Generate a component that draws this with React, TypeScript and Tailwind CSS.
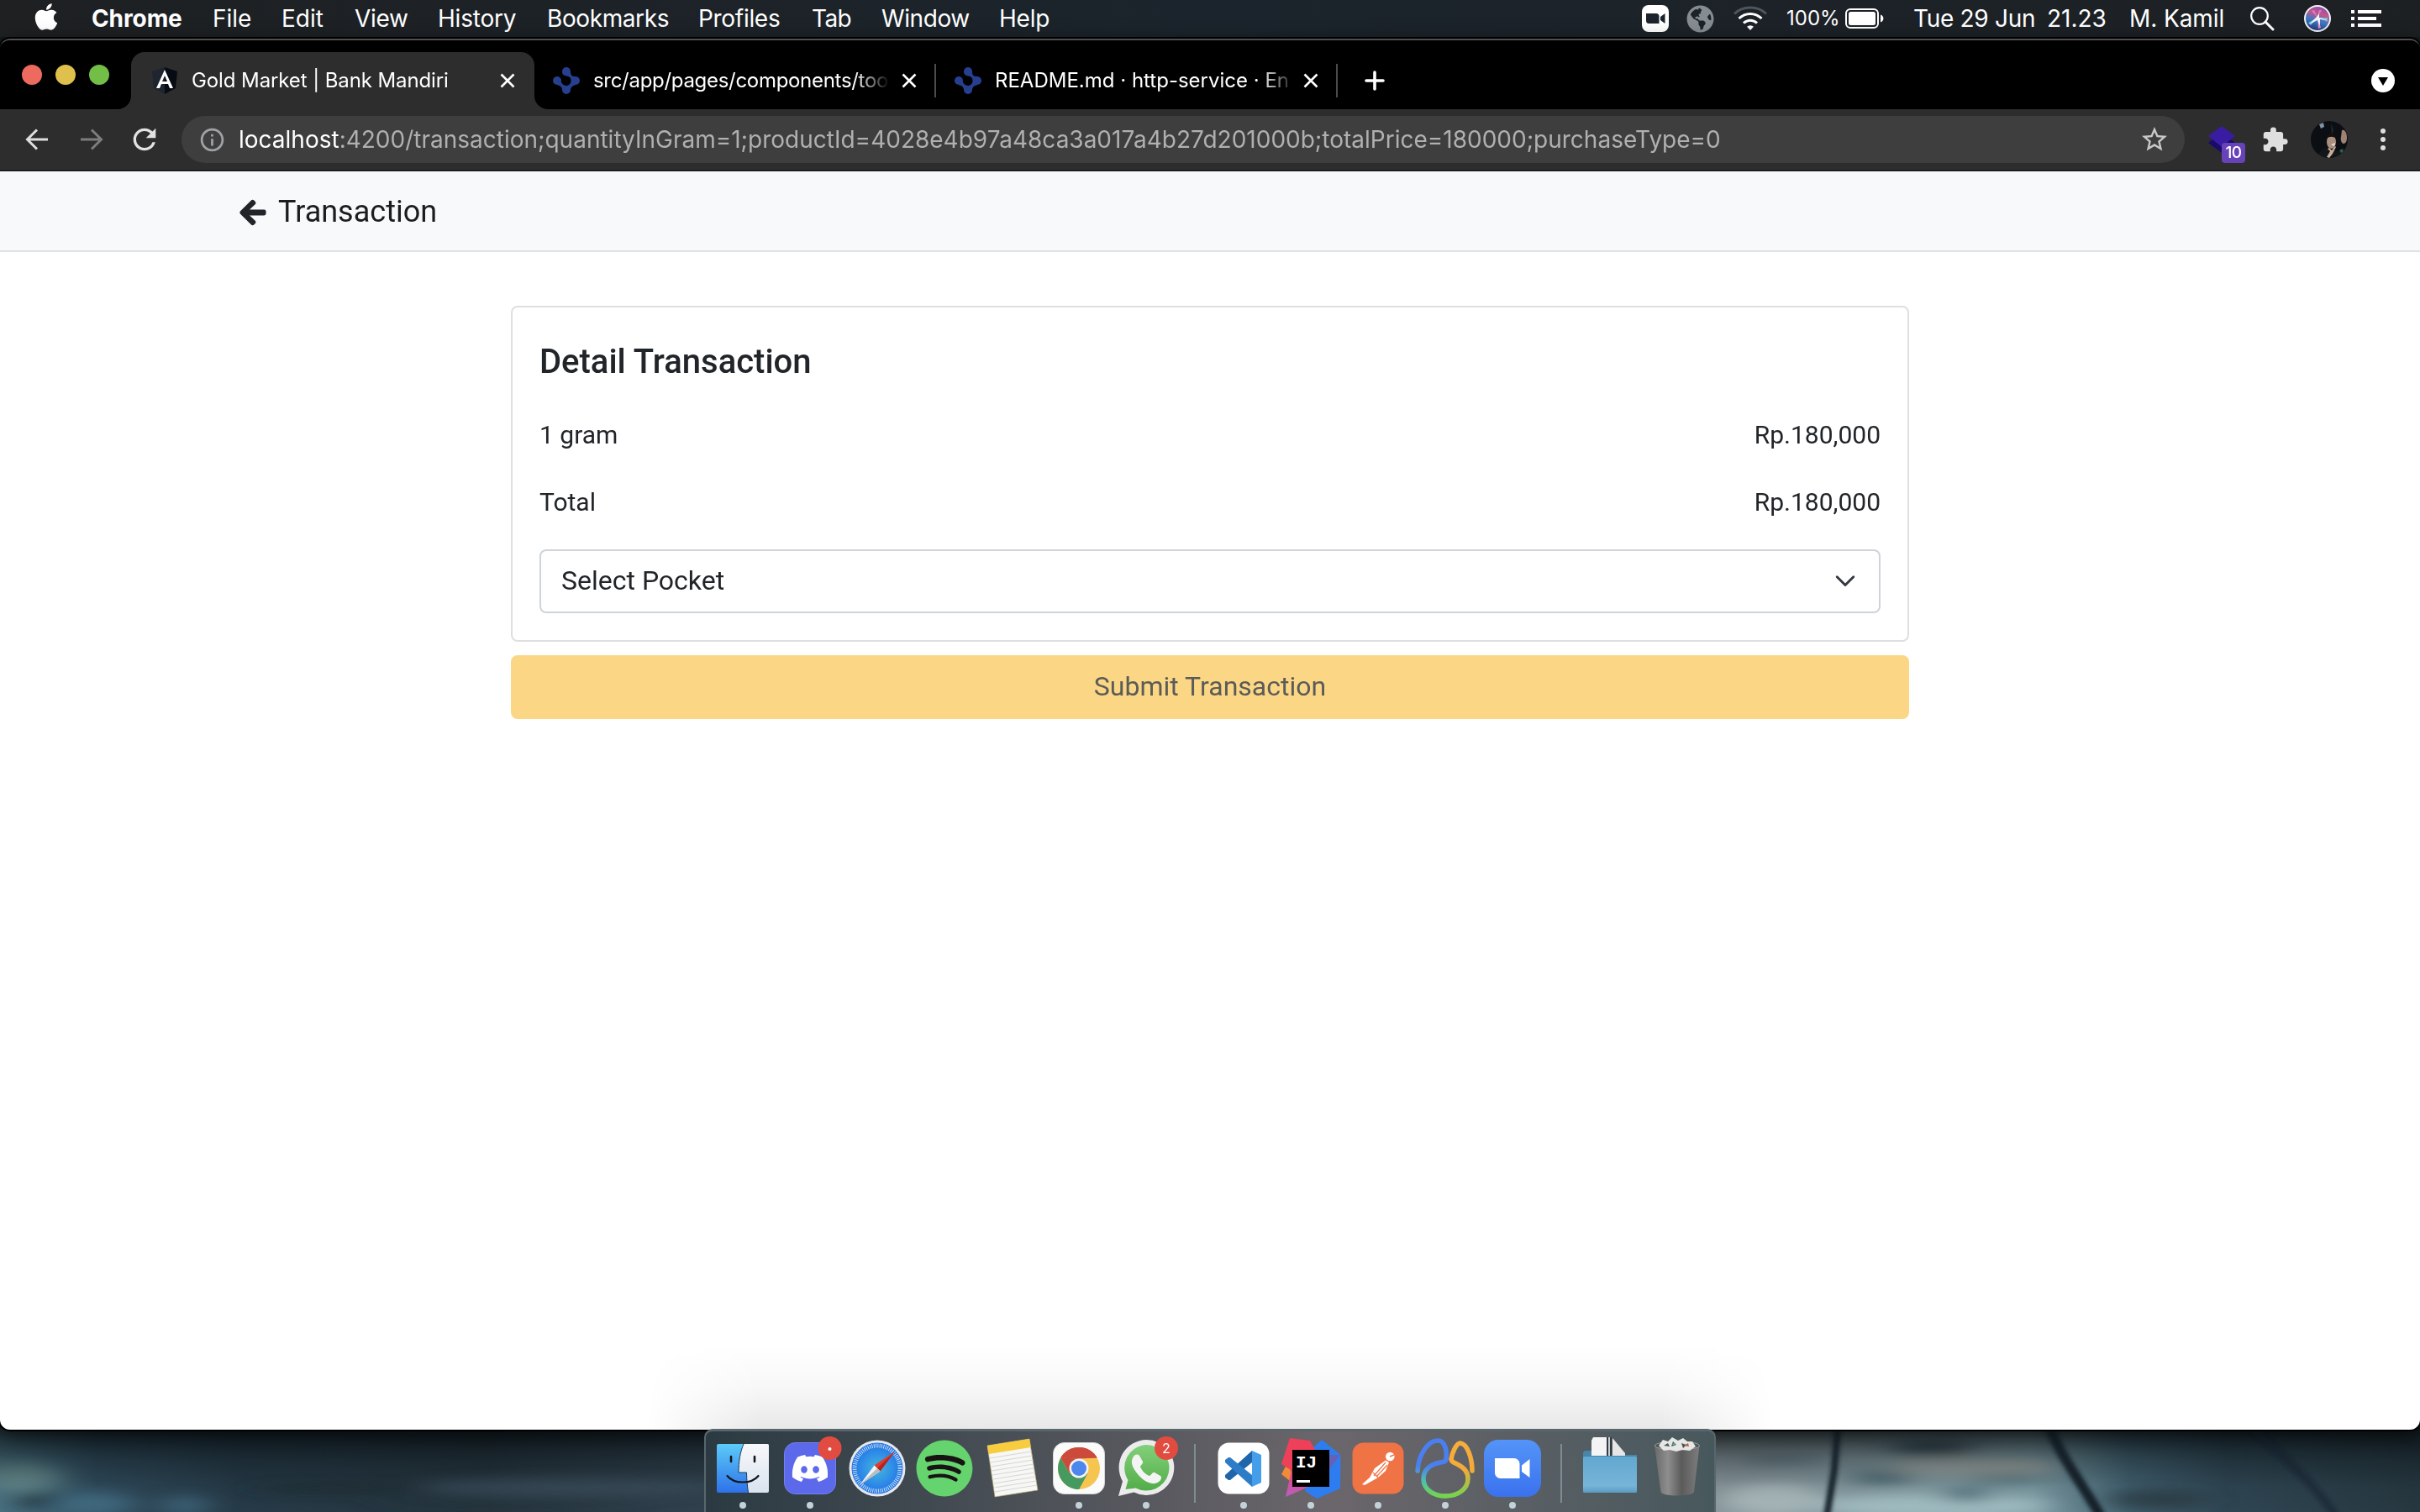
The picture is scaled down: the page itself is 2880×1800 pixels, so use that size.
import type { ReactNode } from "react";
import { FaApple, FaArrowLeft, FaDiscord, FaGlobeAmericas, FaPhoneAlt, FaSpotify } from "react-icons/fa";
import { MdExtension, MdInfoOutline, MdRefresh, MdStarBorder } from "react-icons/md";

const menus = [
  { label: "Chrome", cls: "w-[145px] pl-px font-bold tracking-[-0.1px]" },
  { label: "File", cls: "w-[82px]" },
  { label: "Edit", cls: "w-[87px]" },
  { label: "View", cls: "w-[99px] tracking-[-0.3px]" },
  { label: "History", cls: "w-[130px] tracking-[-0.2px]" },
  { label: "Bookmarks", cls: "w-[180px] tracking-[-0.4px]" },
  { label: "Profiles", cls: "w-[135px] tracking-[-0.3px]" },
  { label: "Tab", cls: "w-[83px] tracking-[-0.6px]" },
  { label: "Window", cls: "w-[140px] tracking-[-0.4px]" },
  { label: "Help", cls: "w-[80px] tracking-[-0.2px]" },
];

function MenuBar() {
  return (
    <div className="flex h-[44px] shrink-0 items-center whitespace-pre bg-linear-to-r from-[#1e2022] via-[#1b242c] to-[#1d2023] text-[28px] leading-[44px] text-white">
      <FaApple size={36} className="mr-[35px] ml-[37px] -mt-[5px]" />
      {menus.map((m) => (
        <div key={m.label} className={m.cls}>{m.label}</div>
      ))}
      <div className="ml-auto flex items-center pr-[46px]">
        <svg width="32" height="32" viewBox="0 0 32 32">
          <rect width="32" height="32" rx="8" fill="#fff" />
          <path d="M5 10h12a3.500 3.500 0 0 1 3.500 3.500V22H8.500A3.500 3.500 0 0 1 5 18.500zM22 14l5.500-4v12L22 18z" fill="#1b242c" />
        </svg>
        <FaGlobeAmericas size={33} className="ml-[21px] text-[#868d92]" />
        <svg width="40" height="32" viewBox="0 0 40 32" className="ml-[23px]" fill="none" strokeWidth="3">
          <path d="M1 10.500C11 .5 29 .5 39 10.500" stroke="#4d555b" />
          <path d="M6.500 16C14 8.500 26 8.500 33.500 16" stroke="#fff" />
          <path d="M12 21.500c4.800-4.500 11.200-4.500 16 0" stroke="#fff" />
          <path d="M20 30l-4-4.200c2.500-2 5.500-2 8 0z" fill="#fff" />
        </svg>
        <div className="ml-[23px] w-[61px] text-[24px]">100%</div>
        <svg width="46" height="24" viewBox="0 0 46 24" className="ml-[9px]">
          <rect x="1" y="1" width="38" height="22" rx="5" fill="none" stroke="#fff" strokeWidth="2" />
          <rect x="4" y="4" width="32" height="16" rx="2.500" fill="#fff" />
          <path d="M42 7.500c4.500 1 4.500 8 0 9z" fill="#fff" />
        </svg>
        <div className="ml-[35px] w-[148px] tracking-[-0.3px]">Tue 29 Jun</div>
        <div className="ml-[11px] w-[71px]">21.23</div>
        <div className="ml-[27px] w-[113px] tracking-[-0.1px]">M. Kamil</div>
        <svg width="29" height="29" viewBox="0 0 29 29" className="ml-[31px]" fill="none" stroke="#fff">
          <circle cx="11" cy="11" r="9.800" strokeWidth="2.200" />
          <path d="M18 18l9 9" strokeWidth="3" strokeLinecap="round" />
        </svg>
        <svg width="32" height="32" viewBox="0 0 32 32" className="ml-[35px]">
          <defs>
            <linearGradient id="siri" x1="0.6" y1="0" x2="0.3" y2="1">
              <stop offset="0" stopColor="#8a4fa8" />
              <stop offset="0.3" stopColor="#c2568f" />
              <stop offset="0.6" stopColor="#3a78c4" />
              <stop offset="1" stopColor="#22306e" />
            </linearGradient>
          </defs>
          <circle cx="16" cy="16" r="15" fill="url(#siri)" stroke="#f1f1f4" strokeWidth="2" />
          <path d="M16 15L5 21l3 3zM16 15l12 5 0-5z" fill="#6fd6dc" opacity="0.8" />
          <path d="M16 15l1 13 3-1z" fill="#e58fd0" />
          <path d="M16 15L9 7l3-1zM16 15l5-9-3 0z" fill="#e58bbd" opacity="0.8" />
          <path d="M6 23l9-9 3-4 0 5 10 3-9-1 0 8-3-7z" fill="#fff" opacity="0.9" />
        </svg>
        <svg width="36" height="20" viewBox="0 0 36 20" className="ml-[24px]" fill="#fff">
          <path d="M0 0h4v4H0zM8 0h28v4H8zM0 8h4v4H0zM8 8h22v4H8zM0 16h4v4H0zM8 16h28v4H8z" />
        </svg>
      </div>
    </div>
  );
}

function CloseIcon() {
  return (
    <svg width="18" height="18" viewBox="0 0 18 18" className="shrink-0" stroke="#fff" strokeWidth="2.600">
      <path d="M1.500 1.500l15 15M16.500 1.500l-15 15" />
    </svg>
  );
}

function RepoIcon() {
  return (
    <svg width="32" height="32" viewBox="0 0 32 32" className="shrink-0" fill="#263f8f">
      <circle cx="16" cy="5" r="5" />
      <circle cx="5" cy="16" r="5" />
      <circle cx="27" cy="16" r="5" />
      <circle cx="16" cy="27" r="5" />
      <path d="M11 5h10c0 5 2 6 6 6v10c-4 1-6 3-6 6H11c0-3-2-5-6-6l3-9c1 6 4 10 8 10 3 0 5.500-2.500 5.500-6s-2-5-5.500-5.500S11 8 11 5z" />
    </svg>
  );
}

function TabStrip() {
  return (
    <div className="flex h-[82px] items-end bg-black text-[24px] text-white">
      <div className="mb-[29px] ml-[26px] flex gap-4">
        <div className="size-6 rounded-full bg-[#ed6a5f]" />
        <div className="size-6 rounded-full bg-[#e0c04c]" />
        <div className="size-6 rounded-full bg-[#72be47]" />
      </div>
      <div className="relative ml-[26px] flex h-[68px] w-[480px] items-center rounded-t-[16px] bg-[#2d2d2d] pl-[24px]">
        <svg width="16" height="16" viewBox="0 0 16 16" className="absolute bottom-0 -left-[16px]" fill="#2d2d2d">
          <path d="M16 0v16H0A16 16 0 0 0 16 0z" />
        </svg>
        <svg width="16" height="16" viewBox="0 0 16 16" className="absolute -right-[16px] bottom-0" fill="#2d2d2d">
          <path d="M0 0v16h16A16 16 0 0 1 0 0z" />
        </svg>
        <svg width="32" height="32" viewBox="0 0 32 32" className="shrink-0">
          <path d="M16 0L1 5l2 20 13 7z" fill="#1e2430" />
          <path d="M16 0l15 5-2 20-13 7z" fill="#070b14" />
          <path d="M16 3L6 25h4l2-5h8l2 5h4zm0 7l3 7h-6z" fill="#fff" fillRule="evenodd" />
        </svg>
        <div className="ml-[16px] w-[367px] whitespace-pre tracking-[-0.1px]">Gold Market | Bank Mandiri</div>
        <CloseIcon />
      </div>
      <div className="flex h-[68px] w-[478px] items-center pl-[22px]">
        <RepoIcon />
        <div className="ml-[16px] w-[353px] overflow-hidden whitespace-pre tracking-[-0.3px] mask-r-from-88% mask-r-to-100%">src/app/pages/components/too</div>
        <div className="ml-[14px] flex"><CloseIcon /></div>
        <div className="ml-auto h-[40px] w-[2px] bg-[#4c4c4c]" />
      </div>
      <div className="flex h-[68px] w-[478px] items-center pl-[22px]">
        <RepoIcon />
        <div className="ml-[16px] w-[351px] overflow-hidden whitespace-pre mask-r-from-90% mask-r-to-102%">README.md · http-service · En</div>
        <div className="ml-[16px] flex"><CloseIcon /></div>
        <div className="ml-auto h-[40px] w-[2px] bg-[#4c4c4c]" />
      </div>
      <svg width="24" height="24" viewBox="0 0 24 24" className="mb-[22px] ml-[32px]" stroke="#fff" strokeWidth="3.600" strokeLinecap="round">
        <path d="M12 2v20M2 12h20" />
      </svg>
      <svg width="28" height="28" viewBox="0 0 28 28" className="mr-[30px] mb-[20px] ml-auto">
        <circle cx="14" cy="14" r="14" fill="#fff" />
        <path d="M8 10h12l-6 10z" fill="#000" />
      </svg>
    </div>
  );
}

function Toolbar() {
  return (
    <div className="flex h-[74px] items-center border-b-2 border-[#1e1e1f] bg-[#2d2d2d] text-[28px]">
      <svg width="28" height="26" viewBox="0 0 28 26" className="ml-[30px]" fill="none" stroke="#dedede" strokeWidth="3">
        <path d="M27 13H3M14 1.500L2.500 13 14 24.500" />
      </svg>
      <svg width="28" height="26" viewBox="0 0 28 26" className="ml-[37px]" fill="none" stroke="#7d7d7d" strokeWidth="3">
        <path d="M1 13h24M14 1.500L25.500 13 14 24.500" />
      </svg>
      <MdRefresh size={40} className="ml-[29px] text-[#e2e2e2]" />
      <div className="ml-[24px] flex h-[56px] w-[2384px] items-center rounded-full bg-[#3e3e3e] pr-[18px] pl-[20px]">
        <MdInfoOutline size={33} className="text-[#9fa3a8]" />
        <div className="ml-[15px] whitespace-pre text-[#b0b0b0]">
          <span className="text-white">localhost</span>:4200/transaction;quantityInGram=1;productId=4028e4b97a48ca3a017a4b27d201000b;totalPrice=180000;purchaseType=0
        </div>
        <MdStarBorder size={36} className="ml-auto text-[#c8c8c8]" />
      </div>
      <div className="relative ml-[28px] h-[44px] w-[44px]">
        <svg width="32" height="32" viewBox="0 0 32 32" className="mt-[6px]">
          <path d="M0 20L16 8l16 12-16 12z" fill="#1a0a6b" />
          <path d="M0 12L16 0l16 12-16 13z" fill="#3a1ca3" />
        </svg>
        <div className="absolute top-[26px] left-[16px] flex h-[24px] w-[28px] items-center justify-center rounded-[4px] bg-[#6842b8] text-[19px] font-medium tracking-[-0.5px] text-white">10</div>
      </div>
      <MdExtension size={33} className="ml-[19px] text-[#dfdfdf]" />
      <svg width="44" height="44" viewBox="0 0 44 44" className="ml-[26px] rounded-full">
        <rect width="44" height="44" fill="#0b0f13" />
        <path d="M10 4l5-2 1 5-4 2z" fill="#7e93a3" />
        <path d="M24 3l3 8-2 6z" fill="#1f2a33" />
        <ellipse cx="24.500" cy="25" rx="5.500" ry="8" fill="#a98f7f" />
        <path d="M18.500 21c0-7 11-8 12 0-4-3-8-3-12 0z" fill="#15110f" />
        <path d="M24 28l5-2-1 4z" fill="#e8ddd5" />
        <path d="M37 11c4-1 6 4 6 9s-2 7-4 7-4-4-3-8z" fill="#a08272" />
        <path d="M8 44c2-12 10-12 16-10s14 0 16 10z" fill="#12171b" />
        <path d="M19 43l4-7-3-3 2-1 3 3 4-5 1 1-4 8-4 5z" fill="#c9ad98" />
        <path d="M34 35l4-2 1 4-3 1z" fill="#2b5e57" />
      </svg>
      <svg width="6" height="26" viewBox="0 0 6 26" className="ml-[39px]" fill="#dfdfdf">
        <circle cx="3" cy="3" r="3" />
        <circle cx="3" cy="13" r="3" />
        <circle cx="3" cy="23" r="3" />
      </svg>
    </div>
  );
}

function Row({ label, value }: { label: string; value: string }) {
  return (
    <div className="flex h-[48px] justify-between text-[30px] leading-[48px]">
      <span>{label}</span>
      <span>{value}</span>
    </div>
  );
}

function Page() {
  return (
    <div className="grow bg-white font-[Roboto,sans-serif] text-[#212529]">
      <header className="flex h-[96px] items-center border-b-2 border-[#dee2e6] bg-[#f8f9fb] pl-[284px]">
        <FaArrowLeft size={34} className="mt-[3px]" stroke="#212529" strokeWidth={22} strokeLinejoin="round" />
        <span className="mt-px ml-[13px] text-[36px] text-[#1b1d1f]">Transaction</span>
      </header>
      <main className="mx-auto w-[1664px] pt-[64px]">
        <section className="rounded-lg border-2 border-[#dfdfdf] px-8 pt-[41px] pb-8">
          <h1 className="text-[40px] leading-[48px] font-medium">Detail Transaction</h1>
          <div className="mt-[39px] flex flex-col gap-8">
            <Row label="1 gram" value="Rp.180,000" />
            <Row label="Total" value="Rp.180,000" />
            <div className="flex h-[76px] items-center justify-between rounded-lg border-2 border-[#ced4da] pr-[28px] pl-[24px] text-[32px]">
              <span className="-mt-[2px]">Select Pocket</span>
              <svg width="24" height="24" viewBox="0 0 16 16" fill="none" stroke="#343a40" strokeWidth="2" strokeLinecap="round" strokeLinejoin="round">
                <path d="M1.500 4.500l6.500 6.500 6.500-6.500" />
              </svg>
            </div>
          </div>
        </section>
        <button className="mt-4 block h-[76px] w-full rounded-lg bg-[#fbd785] pb-[2px] text-[32px] text-[#5b5b58]">Submit Transaction</button>
      </main>
    </div>
  );
}

function Wallpaper() {
  return (
    <svg width="2880" height="100" viewBox="0 0 2880 100" preserveAspectRatio="none" className="absolute bottom-0 left-0">
      <defs>
        <linearGradient id="wall" x1="0" x2="1" y1="0" y2="0">
          <stop offset="0" stopColor="#4a7180" />
          <stop offset="0.04" stopColor="#2f4a5a" />
          <stop offset="0.1" stopColor="#263a47" />
          <stop offset="0.2" stopColor="#25343d" />
          <stop offset="0.29" stopColor="#30414d" />
          <stop offset="0.6" stopColor="#5a6668" />
          <stop offset="0.71" stopColor="#87959a" />
          <stop offset="0.84" stopColor="#7c9aa2" />
          <stop offset="0.88" stopColor="#41606f" />
          <stop offset="0.92" stopColor="#2f4653" />
          <stop offset="1" stopColor="#26373f" />
        </linearGradient>
        <linearGradient id="wallShade" x1="0" x2="0" y1="0" y2="1">
          <stop offset="0" stopColor="#050a0d" stopOpacity="0.72" />
          <stop offset="0.35" stopColor="#050a0d" stopOpacity="0.35" />
          <stop offset="0.7" stopColor="#050a0d" stopOpacity="0.06" />
          <stop offset="1" stopColor="#050a0d" stopOpacity="0" />
        </linearGradient>
        <filter id="soft" x="-50%" y="-50%" width="200%" height="200%"><feGaussianBlur stdDeviation="18 7" /></filter>
        <filter id="edge" x="-100%" y="-20%" width="300%" height="140%"><feGaussianBlur stdDeviation="2.500" /></filter>
      </defs>
      <rect width="2880" height="100" fill="url(#wall)" />
      <g filter="url(#soft)" opacity="0.8">
        <ellipse cx="25" cy="58" rx="45" ry="18" fill="#6b8f90" />
        <ellipse cx="110" cy="90" rx="50" ry="14" fill="#457188" />
        <ellipse cx="220" cy="92" rx="30" ry="12" fill="#40677f" />
        <ellipse cx="45" cy="86" rx="22" ry="10" fill="#1d2e38" />
        <ellipse cx="680" cy="70" rx="180" ry="12" fill="#3a4e5b" />
        <ellipse cx="400" cy="72" rx="110" ry="5" fill="#1b292f" />
        <ellipse cx="600" cy="88" rx="160" ry="4" fill="#22323a" />
        <ellipse cx="2110" cy="85" rx="60" ry="18" fill="#b0bfc0" />
        <ellipse cx="2300" cy="92" rx="140" ry="14" fill="#a9c6ca" />
        <ellipse cx="2350" cy="45" rx="100" ry="10" fill="#a8aba6" />
        <ellipse cx="2300" cy="24" rx="50" ry="8" fill="#1e3944" />
        <ellipse cx="2240" cy="60" rx="35" ry="8" fill="#3f606a" />
        <ellipse cx="2390" cy="60" rx="50" ry="6" fill="#4d6e77" />
        <ellipse cx="2340" cy="80" rx="30" ry="7" fill="#355a68" />
        <ellipse cx="2120" cy="38" rx="50" ry="4" fill="#4d6770" />
        <ellipse cx="2570" cy="85" rx="60" ry="12" fill="#2a3a43" />
      </g>
      <rect width="2880" height="100" fill="url(#wallShade)" />
      <g filter="url(#edge)" fill="none" stroke="#15222b">
        <path d="M2187 0l-4 50-9 55" strokeWidth="8" />
        <path d="M2440 0c10 30 40 70 60 105" strokeWidth="12" />
        <path d="M2680 0c30 30 70 60 100 105" strokeWidth="8" opacity="0.6" />
      </g>
    </svg>
  );
}

function Slot({ running, children }: { running?: boolean; children: ReactNode }) {
  return (
    <svg width="80" height="100" viewBox="0 0 80 100" className="shrink-0">
      {children}
      {running && <circle cx="40" cy="92" r="4" fill="#c3d2da" />}
    </svg>
  );
}

function DockDivider() {
  return <div className="mx-[17px] mt-[15px] h-[70px] w-[2px] shrink-0 bg-[#7d8d94]" />;
}

function Dock() {
  return (
    <div className="absolute bottom-0 left-[838px] flex h-[99px] w-[1204px] items-start overflow-hidden rounded-t-[10px] border-x-2 border-t-3 border-[#59666d] bg-linear-to-r from-[#2b3a42] from-0% via-[#6b666b] via-62% to-[#47585d] pl-[4px]">
      <div className="-mt-[4px] flex">
        <Slot running>
          <defs>
            <linearGradient id="fL" x1="0" x2="0" y1="0" y2="1"><stop stopColor="#5ccbf8" /><stop offset="1" stopColor="#2e72ea" /></linearGradient>
            <linearGradient id="fR" x1="0" x2="0" y1="0" y2="1"><stop stopColor="#f8f8fa" /><stop offset="1" stopColor="#d9e4f0" /></linearGradient>
          </defs>
          <rect x="9" y="19" width="62" height="58" rx="2" fill="url(#fL)" />
          <path d="M41 19h28a2 2 0 0 1 2 2v54a2 2 0 0 1-2 2H46.500c-1-7-2-16-2-24H35C35 40 37 28 41 19z" fill="url(#fR)" />
          <path d="M41 19C37 28 35 40 35 53h9.500c0 8 1 17 2 24" fill="none" stroke="#1c3a56" strokeWidth="1" />
          <path d="M26 34v6M54 34v6" stroke="#14171c" strokeWidth="2.600" strokeLinecap="round" />
          <path d="M21.500 57c8 10 29 10 37 0" fill="none" stroke="#14171c" strokeWidth="2.200" strokeLinecap="round" />
        </Slot>
        <Slot running>
          <rect x="9.500" y="17.500" width="61" height="61" rx="13" fill="#5b69ea" stroke="#7482f4" />
          <FaDiscord x="17" y="25" size={46} color="#fff" />
          <circle cx="63.500" cy="24" r="14" fill="#e24c40" />
          <circle cx="63.500" cy="25" r="2" fill="#fff" />
        </Slot>
        <Slot>
          <defs>
            <radialGradient id="saf"><stop stopColor="#45b6d8" /><stop offset="0.6" stopColor="#2f8ee8" /><stop offset="1" stopColor="#2270e0" /></radialGradient>
          </defs>
          <circle cx="40" cy="48" r="33.500" fill="#e6e9ee" />
          <circle cx="40" cy="48" r="30.500" fill="url(#saf)" />
          <circle cx="40" cy="48" r="27" fill="none" stroke="#d5ebfb" strokeWidth="5" strokeDasharray="0.9 1.456" />
          <path d="M61 28L36.500 44.500l7 7z" fill="#e03b2f" />
          <path d="M61 28L40 48l3.500 3.500z" fill="#b3251f" />
          <path d="M19 68l17.500-23.500 7 7z" fill="#f4f4f4" />
          <path d="M19 68l21-20 3.500 3.500z" fill="#b9bdc0" />
        </Slot>
        <Slot>
          <circle cx="40" cy="48" r="32" fill="#191414" />
          <FaSpotify x="5.500" y="13.500" size={69} color="#65d36e" />
        </Slot>
        <Slot>
          <path d="M11 21L61 13l10 61-51 8z" fill="#f7f7f5" stroke="#b7a968" strokeWidth="0.700" />
          <path d="M11 21L61 13l1.700 10L12.700 31z" fill="#f7cd3f" />
          <g stroke="#d6d6d6" strokeWidth="1">
            <path d="M13.500 36l50-8M14.400 41l50-8M15.200 46l50-8M16 51l50-8M16.800 56l50-8M17.600 61l50-8M18.400 66l50-8M19.200 71l50-8M20 76l50-8" />
          </g>
        </Slot>
        <Slot running>
          <rect x="9.500" y="17.500" width="61" height="61" rx="13" fill="#fbfbfb" stroke="#d5d8da" />
          <circle cx="40" cy="48" r="25" fill="#f6c550" />
          <path d="M18.350 35.500A25 25 0 0 1 61.650 35.500L40 36.500z" fill="#cc4a3c" />
          <path d="M18.350 35.500A25 25 0 0 1 61.650 35.500z" fill="#cc4a3c" />
          <path d="M18.350 35.500A25 25 0 0 0 40 73L50 54 29 54z" fill="#479a5f" />
          <path d="M18.350 35.500L29 54l11-6V36.500z" fill="#cc4a3c" />
          <path d="M40 73l10.400-19L40 48l-7 9z" fill="#479a5f" />
          <circle cx="40" cy="48" r="11.500" fill="#f4f4f4" />
          <circle cx="40" cy="48" r="9" fill="#4d87ee" />
        </Slot>
        <Slot running>
          <defs>
            <linearGradient id="wa" x1="0" x2="0" y1="0" y2="1"><stop stopColor="#83d07a" /><stop offset="1" stopColor="#52ad49" /></linearGradient>
          </defs>
          <path d="M40.500 14a33 33 0 1 1-15 62.500L7 81l5-17.500A33 33 0 0 1 40.500 14z" fill="#ececec" />
          <path d="M40.500 20a27.300 27.300 0 1 1-13 51.500L15.500 73l3-11A27.300 27.300 0 0 1 40.500 20z" fill="url(#wa)" />
          <path d="M25 34c2-3 5-3 7-1l4 7c1 2-2 4-3 6 2 5 6 9 11 11 2-1 4-5 6-4l7 4c2 1 1 5-2 7-5 4-12 2-19-3-7-6-12-13-13-19-.3-3 .5-6 2-8z" fill="#f4f4f4" />
          <circle cx="64" cy="24" r="14" fill="#e24c40" />
          <text x="64" y="29.500" textAnchor="middle" fontSize="16" fill="#fff">2</text>
        </Slot>
      </div>
      <DockDivider />
      <div className="-mt-[4px] flex">
        <Slot running>
          <rect x="9.500" y="17.500" width="61" height="61" rx="13" fill="#fff" />
          <path d="M50 27L18 56v3l4 3h2l26-21z" fill="#2065a9" />
          <path d="M50 70L18 41v-3l4-3h2l26 21z" fill="#2c7cc8" />
          <path d="M50 27l11 5v33l-11 5z" fill="#459ee9" />
        </Slot>
        <Slot running>
          <defs>
            <linearGradient id="ijM" x1="0" x2="0" y1="0" y2="1"><stop stopColor="#ee4168" /><stop offset="1" stopColor="#b85fc0" /></linearGradient>
          </defs>
          <path d="M53 14l22.500 18L75 72 47 84 33 75l8-50z" fill="#2d7df0" />
          <path d="M75 32L60 52l-7-20z" fill="#6560b8" />
          <path d="M12 42L5 55l20 16z" fill="#f28a38" />
          <path d="M18 45l-8 37 32-14z" fill="url(#ijM)" />
          <path d="M15 12l24 3 10 18-28 20-16-10z" fill="#ee4059" />
          <rect x="18" y="26" width="44" height="44" fill="#000" />
          <text x="22" y="47" fontFamily="Liberation Mono" fontSize="21" fontWeight="700" fill="#fff">IJ</text>
          <rect x="23" y="62" width="16" height="3" fill="#fff" />
        </Slot>
        <Slot running>
          <rect x="9.500" y="17.500" width="61" height="61" rx="13" fill="#f07345" />
          <circle cx="54.300" cy="34" r="5.300" fill="#fff" />
          <path d="M54 34l5-2" stroke="#f07345" strokeWidth="1.500" />
          <path d="M49 38.500l4 2.500-4 10-9 8-16 9-3-1 9-8 6-11z" fill="#fff" />
          <path d="M49 41L35 57M51 44L38 58M34 53l6 6" stroke="#f07345" strokeWidth="1.200" />
        </Slot>
        <Slot running>
          <defs>
            <linearGradient id="loopL" x1="0" x2="0" y1="0" y2="1"><stop stopColor="#4a7ff0" /><stop offset="0.45" stopColor="#4a7ff0" /><stop offset="0.75" stopColor="#4fc3a8" /><stop offset="1" stopColor="#74d350" /></linearGradient>
            <linearGradient id="loopR" x1="0" x2="0" y1="0" y2="1"><stop stopColor="#f6ad3c" /><stop offset="0.5" stopColor="#f3aa38" /><stop offset="1" stopColor="#74d350" /></linearGradient>
          </defs>
          <g fill="none" strokeWidth="5.500" strokeLinecap="round" strokeLinejoin="round">
            <path d="M7 51C8 31 20 15 31 15c9 0 11 12 10 22 0 3-3 3.500-7 4C22 43 14 50 14 60.500 14 73 26 81 40 81" stroke="url(#loopL)" />
            <path d="M72 51C72 35 66 19 58 18c-5 0-10 12-11 19 0 3 3 4 8 6.500C62 47 67 53 67 60c0 13-12 21-27 21" stroke="url(#loopR)" />
          </g>
        </Slot>
        <Slot running>
          <defs>
            <linearGradient id="zm" x1="0" x2="0" y1="0" y2="1"><stop stopColor="#5494f8" /><stop offset="1" stopColor="#3a72ee" /></linearGradient>
          </defs>
          <rect x="6" y="14" width="68" height="68" rx="17" fill="url(#zm)" />
          <path d="M19 36h23a6.500 6.500 0 0 1 6.500 6.500V60h-23A6.500 6.500 0 0 1 19 53.500zM51 44.500l9.500-7.500v22L51 52z" fill="#fff" />
        </Slot>
      </div>
      <DockDivider />
      <div className="-mt-[4px] flex">
        <Slot>
          <defs>
            <linearGradient id="fold" x1="0" x2="0" y1="0" y2="1"><stop stopColor="#62a8d0" /><stop offset="0.8" stopColor="#77b4d8" /><stop offset="1" stopColor="#5a9cc4" /></linearGradient>
          </defs>
          <path d="M8 29l2-2h16l3 5h43v20H8z" fill="#4786a8" />
          <path d="M20 11h17v22H18V15z" fill="#f4f4f4" />
          <path d="M36 11h6v22h-6z" fill="#333c42" />
          <path d="M38 11h2v22h-2z" fill="#c9ced1" />
          <path d="M43 12l15 18v3H43z" fill="#e6e6e6" />
          <rect x="8" y="34" width="64" height="43" rx="1.500" fill="url(#fold)" />
        </Slot>
        <Slot>
          <defs>
            <linearGradient id="bin" x1="0" x2="1" y1="0" y2="0"><stop stopColor="#6a6a6a" /><stop offset="0.3" stopColor="#8e8e8e" /><stop offset="0.6" stopColor="#5b5b5b" /><stop offset="1" stopColor="#7d7d7d" /></linearGradient>
          </defs>
          <path d="M13 21l7.500 55c1 6 38.500 6 39.500 0l6.500-55z" fill="url(#bin)" />
          <ellipse cx="40" cy="21" rx="26.500" ry="5" fill="#4f5355" stroke="#9a9d9e" />
          <path d="M18 21l5-7 6 2 5-5 7 4 6-3 5 4 6 0 4 6-7 5-9-1-7 2-8-2-7 1z" fill="#e6e6e4" />
          <path d="M24 21l5-3 2 4zM45 18l6 2-4 4zM35 16l4 4-6 2z" fill="#4b5358" />
          <path d="M33 19l4-1 1 3z" fill="#53b7a5" />
          <path d="M48 21l5-3 1 4z" fill="#b2603f" />
        </Slot>
      </div>
    </div>
  );
}

export default function App() {
  return (
    <div className="relative flex h-[1800px] w-[2880px] flex-col overflow-hidden bg-[#101a20] font-[Inter,sans-serif]">
      <Wallpaper />
      <MenuBar />
      <div className="relative mt-[2px] flex h-[1656px] flex-col overflow-hidden rounded-[12px] border-t-2 border-[#4f4f4f] bg-black shadow-[0_0_0_2px_#000,0_6px_24px_rgba(0,0,0,0.6)]">
        <TabStrip />
        <Toolbar />
        <Page />
        <div className="absolute bottom-0 left-[770px] h-[100px] w-[1340px] bg-linear-to-b from-transparent via-[#000000]/3 via-50% to-[#000000]/9 mask-x-from-90% mask-x-to-100%" />
      </div>
      <Dock />
    </div>
  );
}
